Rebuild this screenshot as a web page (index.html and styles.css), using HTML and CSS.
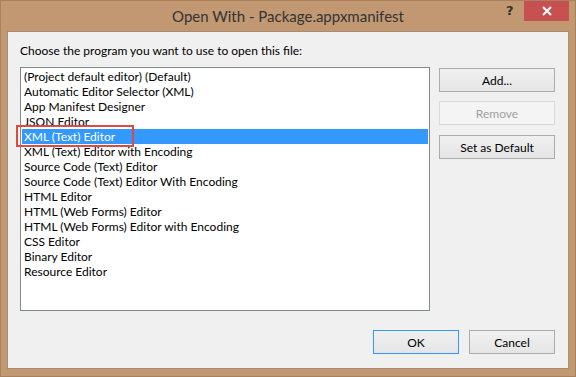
FILE: index.html
```html
<!DOCTYPE html>
<html>
<head>
<meta charset="utf-8">
<link rel="stylesheet" href="styles.css">
</head>
<body>
<div class="window">
  <div class="titlebar">
    <div class="title">Open With - Package.appxmanifest</div>
    <div class="help">?</div>
    <div class="close">
      <svg width="12" height="10" viewBox="0 0 12 10"><path d="M2 1 L10 9 M10 1 L2 9" stroke="#fff" stroke-width="2" fill="none"/></svg>
    </div>
  </div>
  <div class="client">
    <div class="prompt">Choose the program you want to use to open this file:</div>
    <div class="main">
      <div class="list">
        <div class="item">(Project default editor) (Default)</div>
        <div class="item">Automatic Editor Selector (XML)</div>
        <div class="item">App Manifest Designer</div>
        <div class="item">JSON Editor</div>
        <div class="item selected">XML (Text) Editor<span class="highlight"></span></div>
        <div class="item">XML (Text) Editor with Encoding</div>
        <div class="item">Source Code (Text) Editor</div>
        <div class="item">Source Code (Text) Editor With Encoding</div>
        <div class="item">HTML Editor</div>
        <div class="item">HTML (Web Forms) Editor</div>
        <div class="item">HTML (Web Forms) Editor with Encoding</div>
        <div class="item">CSS Editor</div>
        <div class="item">Binary Editor</div>
        <div class="item">Resource Editor</div>
      </div>
      <div class="side">
        <button class="btn side-btn">Add...</button>
        <button class="btn side-btn disabled">Remove</button>
        <button class="btn side-btn">Set as Default</button>
      </div>
    </div>
    <div class="footer">
      <button class="btn foot-btn default">OK</button>
      <button class="btn foot-btn">Cancel</button>
    </div>
  </div>
</div>
</body>
</html>
```
FILE: styles.css
```css
html, body {
  margin: 0;
  padding: 0;
  background: #c29873;
}
.window {
  width: 576px;
  height: 377px;
  box-sizing: border-box;
  border: 1px solid #a8815f;
  background: #c29873;
  display: flex;
  flex-direction: column;
  font-family: Lato, "Liberation Sans", sans-serif;
  font-size: 12px;
  color: #000;
}
.titlebar {
  height: 30px;
  position: relative;
  display: flex;
  justify-content: center;
  align-items: center;
}
.title {
  font-size: 15px;
  color: #333;
  margin-top: -1px;
  margin-left: 0;
}
.help {
  position: absolute;
  left: 505px;
  top: 2px;
  font-family: "DejaVu Sans", sans-serif;
  font-weight: bold;
  font-size: 13px;
  color: #333;
}
.close {
  position: absolute;
  left: 523px;
  top: 0;
  width: 45px;
  height: 20px;
  background: #c75050;
  display: flex;
  align-items: center;
  justify-content: center;
}
.client {
  margin: 0 6px 7px 6px;
  flex: 1;
  background: #f0f0f0;
  border: 1px solid #a88c72;
  border-right-color: #ad8f73;
  display: flex;
  flex-direction: column;
  padding: 0 13px 0 12px;
}
.prompt {
  margin-top: 11px;
  height: 15px;
  line-height: 15px;
}
.main {
  display: flex;
  margin-top: 9px;
  gap: 9px;
}
.list {
  width: 411px;
  height: 244px;
  box-sizing: border-box;
  border: 1px solid #828790;
  background: #fff;
  padding: 1px;
}
.item {
  height: 15px;
  line-height: 15px;
  padding-left: 2px;
  white-space: nowrap;
  position: relative;
}
.item.selected {
  background: #3399ff;
  color: #fff;
}
.highlight {
  position: absolute;
  left: -6px;
  top: -4px;
  width: 118px;
  height: 22px;
  box-sizing: border-box;
  border: 2px solid #dd4a3f;
}
.side {
  display: flex;
  flex-direction: column;
  margin-top: 1px;
}
.btn {
  font-family: Lato, "Liberation Sans", sans-serif;
  font-size: 12px;
  color: #000;
  border: 1px solid #acacac;
  background: linear-gradient(#f0f0f0, #e5e5e5);
  padding: 0;
  margin: 0;
  height: 24px;
  box-sizing: border-box;
}
.side-btn {
  width: 116px;
  margin-bottom: 9px;
}
.side-btn:nth-child(3) {
  margin-top: 1px;
}
.btn.disabled {
  color: #a0a0a0;
  border-color: #d9d9d9;
  background: #f4f4f4;
}
.footer {
  display: flex;
  justify-content: flex-end;
  gap: 10px;
  margin-top: 19px;
}
.foot-btn {
  width: 86px;
}
.btn.default {
  border-color: #3399ff;
}
```
